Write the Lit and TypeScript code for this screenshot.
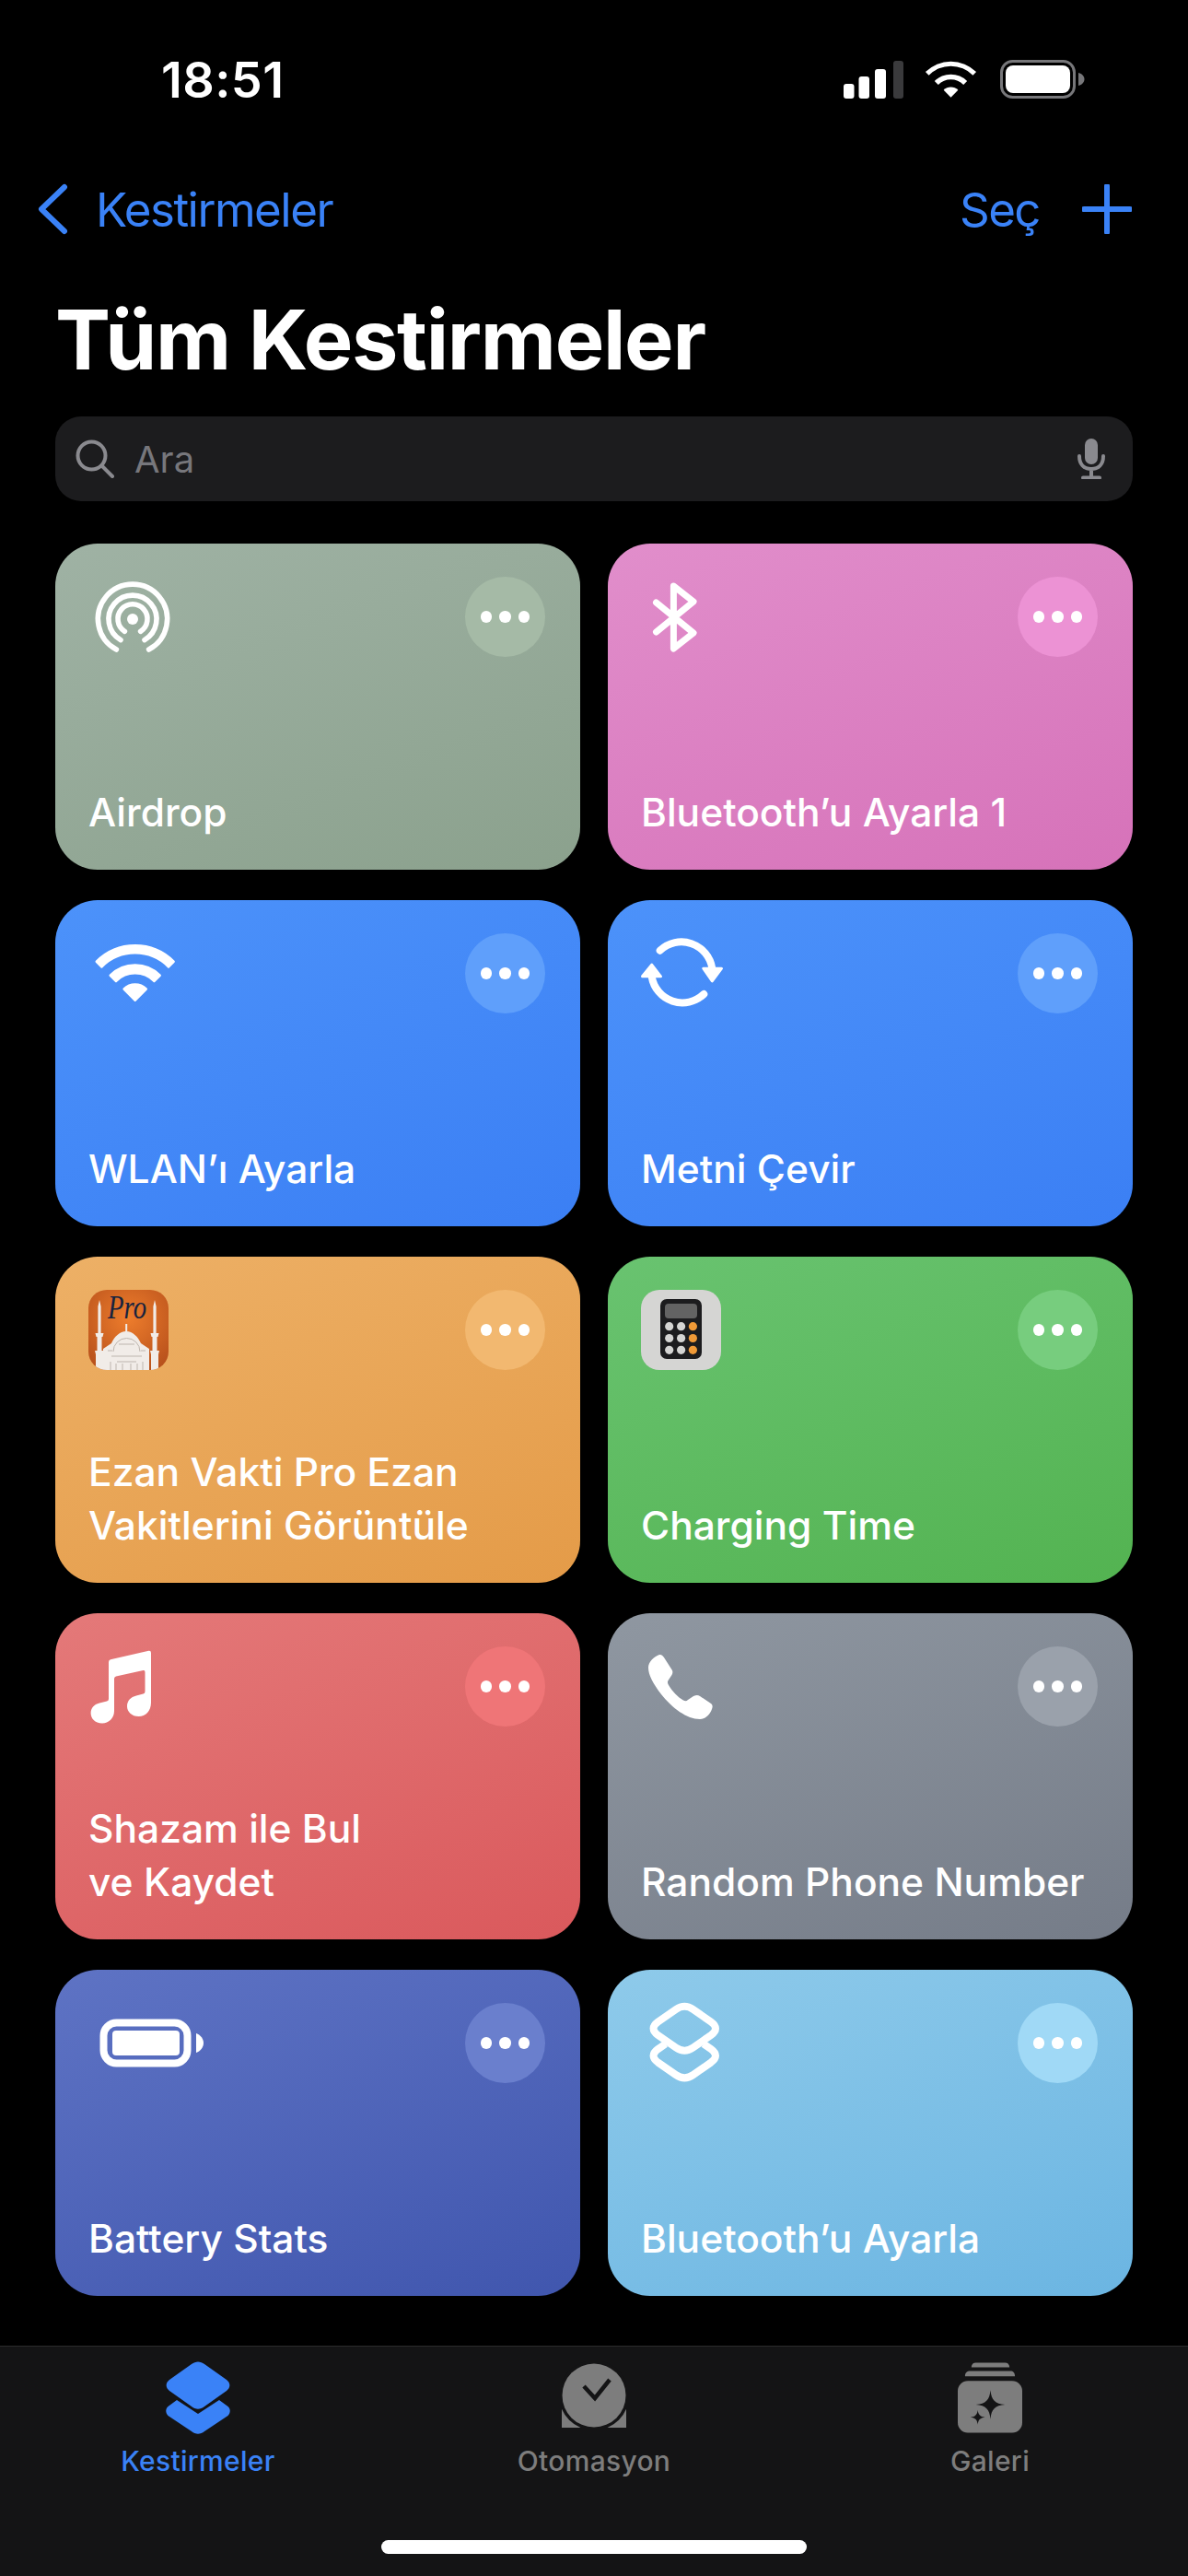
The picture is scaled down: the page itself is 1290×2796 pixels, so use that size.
/**
 * Shortcuts app, "Tüm Kestirmeler" screen on a dark iPhone.
 */
import { LitElement, html, css, svg } from "lit";
import { customElement } from "lit/decorators.js";

const WIFI_PATHS = svg`
    <path d="M1.5 20.5A61.5 61.5 0 0 1 88.5 20.5L82.8 26.2A53.5 53.5 0 0 0 7.2 26.2Z" />
    <path d="M17.1 36.1A39.5 39.5 0 0 1 72.9 36.1L66.6 42.4A30.5 30.5 0 0 0 23.4 42.4Z" />
    <path d="M32.6 51.6A17.5 17.5 0 0 1 57.4 51.6L45 64Z" />
`;

const ICON_AIRDROP = svg`
    <g class="line">
        <path d="M30.4 79A37.6 37.6 0 1 1 65.6 79" />
        <path d="M35 68.6A26 26 0 1 1 61 68.6" />
        <path d="M39.4 59.3A16 16 0 1 1 56.6 59.3" />
    </g>
    <circle class="solid" cx="48" cy="46" r="6" />
`;

const ICON_BLUETOOTH = svg`
    <path class="line thick" d="M16.5 28L57 61L35.4 78V10L57 27L16.5 60" />
`;

const ICON_WIFI = svg`
    <g class="solid rounded" transform="translate(7.5 11) scale(.96)">${WIFI_PATHS}</g>
`;

const ICON_SYNC = svg`
    <path class="line wide" d="M20.7 18.7A33.7 33.7 0 0 1 77.3 38" />
    <path class="line wide" d="M68.3 66A33.7 33.7 0 0 1 11.7 47" />
    <path class="solid rounded" d="M67.8 38.2H87.5L77.3 51.8Z" />
    <path class="solid rounded" d="M1.5 46.8H21.5L11.7 34.2Z" />
`;

const ICON_MUSIC = svg`
    <path class="solid" d="M22 17Q22 14.7 24 14.2L65.5 4.7Q68 4.3 68 7V61C68 70 62 76 54.7 76C47 76 42 71 42 65C42 59 46 55 52 53.5L59.5 51.5Q61.5 51 61.5 49V28Q61.5 25.5 59.5 26L30 32.5Q28 33 28 35V70C28 78 22 83.5 15 83.5C7 83.5 2.6 78 2.6 72.5C2.6 67 6 63 12 61.5L20 59.5Q22 59 22 57Z" />
`;

const ICON_PHONE = svg`
    <path class="solid" d="M20 9C22 8.5 24 10 25 12L33 24.5C35 27 34.5 29 33.5 31L29.5 37C28.5 39 29 40.5 30 42C34 49 40 55 46 58.5C48 59.5 49.5 59.5 51 58L57 54C60 52.5 62 52.5 64 54L76 62C78 63.5 78 66 77 68C75 74 70 79 64 79C50 79 34 67 22 52C13 40 8 31 8 23C8 17 14 11 20 9Z" />
`;

const ICON_BATTERY = svg`
    <rect class="line butt" x="16.5" y="21.5" width="91" height="44" rx="14" />
    <rect class="solid" x="26" y="30" width="73" height="27" rx="4" />
    <path class="solid" d="M117 33C122 35 125 39 125 43.5C125 48 122 52 117 54Z" />
`;

const ICON_LAYERS = svg`
    <path class="line butt" d="M38 7Q47.3 .5 56.6 7L76 20.5Q86 27.7 76 35L56.6 48.5Q47.3 55 38 48.5L18.5 35Q8.6 27.7 18.5 20.5Z" />
    <path class="line butt" d="M26.6 44.5L18.5 50.1Q8.6 57.3 18.5 64.6L38 78.1Q47.3 84.6 56.6 78.1L76 64.6Q86 57.3 76 50.1L68 44.5" />
`;

const ICON_EZAN = svg`
    <defs>
        <radialGradient id="ezan-bg" cx="50%" cy="35%" r="70%">
            <stop offset="0" stop-color="#ee7d2c" />
            <stop offset="1" stop-color="#b9521c" />
        </radialGradient>
        <clipPath id="ezan-clip"><rect width="87" height="87" rx="20" /></clipPath>
    </defs>
    <g clip-path="url(#ezan-clip)">
        <rect width="87" height="87" fill="url(#ezan-bg)" />
        <text class="pro" x="21" y="31" textLength="42" lengthAdjust="spacingAndGlyphs">Pro</text>
        <g fill="#f1ece8">
            <path d="M12 11L13.6 18V47H16.5L15.5 51H14.5V66H17L16 70V87H8V70L7 66H9.5V51H8.5L7.5 47H10.4V18Z" />
            <path d="M72 11L73.6 18V47H76.5L75.5 51H74.5V66H77L76 70V87H68V70L67 66H69.5V51H68.5L67.5 47H70.4V18Z" />
            <rect x="40.2" y="37" width="2" height="9" />
            <path d="M41.2 45C48 45 54 51 57 58L66 64V87H16V64L25 58C28 51 34 45 41.2 45Z" />
        </g>
        <g fill="none" stroke="#bdb5ae" stroke-width="1">
            <path d="M27 67A14.5 14.5 0 0 1 56 67" />
            <path d="M25 72H58M31 78H52M21 66H26M57 66H62M33 59H50" />
            <path d="M24 78V87M30 80V87M37 80V87M46 80V87M53 80V87M59 78V87" />
        </g>
    </g>
`;

const ICON_CALC = svg`
    <rect width="87" height="87" rx="20" fill="#d5d5d3" />
    <rect x="21" y="10" width="45" height="65" rx="7" fill="#1c1c1e" />
    <rect x="26" y="15" width="35" height="16" rx="4" fill="#636363" />
    ${[39.7, 52.5, 65.3].map(
        (y) => svg`
            <circle cx="30.7" cy=${y} r="4.6" fill="#d5d5d3" />
            <circle cx="43.6" cy=${y} r="4.6" fill="#d5d5d3" />
            <circle cx="56.4" cy=${y} r="4.6" fill="#f09a37" />
        `,
    )}
`;

const SHORTCUTS: { name: string[]; tone: string; icon: unknown }[] = [
    { name: ["Airdrop"], tone: "sage", icon: ICON_AIRDROP },
    { name: ["Bluetooth’u Ayarla 1"], tone: "pink", icon: ICON_BLUETOOTH },
    { name: ["WLAN’ı Ayarla"], tone: "blue", icon: ICON_WIFI },
    { name: ["Metni Çevir"], tone: "blue", icon: ICON_SYNC },
    { name: ["Ezan Vakti Pro Ezan", "Vakitlerini Görüntüle"], tone: "orange", icon: ICON_EZAN },
    { name: ["Charging Time"], tone: "green", icon: ICON_CALC },
    { name: ["Shazam ile Bul", "ve Kaydet"], tone: "red", icon: ICON_MUSIC },
    { name: ["Random Phone Number"], tone: "gray", icon: ICON_PHONE },
    { name: ["Battery Stats"], tone: "indigo", icon: ICON_BATTERY },
    { name: ["Bluetooth’u Ayarla"], tone: "sky", icon: ICON_LAYERS },
];

@customElement("app-root")
export class AppRoot extends LitElement {
    private _renderStatus() {
        return html`
            <div class="status">
                <span class="time">18:51</span>
                <svg class="signal" viewBox="0 0 65 41">
                    <rect y="25" width="11.5" height="16" rx="3" fill="#fff" />
                    <rect x="16.5" y="17" width="11.5" height="24" rx="3" fill="#fff" />
                    <rect x="34" y="9" width="12" height="32" rx="3" fill="#fff" />
                    <rect x="54" width="11" height="41" rx="3" fill="#3a3a3c" />
                </svg>
                <svg class="status-wifi" viewBox="0 0 90 66" fill="#fff">${WIFI_PATHS}</svg>
                <svg class="battery" viewBox="0 0 92 42">
                    <rect x="1.5" y="1.5" width="79" height="39" rx="12" fill="none" stroke="#77777a" stroke-width="3" />
                    <rect x="6" y="6" width="70" height="30" rx="8" fill="#fff" />
                    <path d="M85 14C89 15 91.5 18 91.5 21C91.5 24 89 27 85 28Z" fill="#77777a" />
                </svg>
            </div>
        `;
    }

    private _renderNav() {
        return html`
            <div class="nav">
                <svg class="chevron" viewBox="0 0 34 56">
                    <path d="M30 4L5 28L30 52" />
                </svg>
                <span class="back">Kestirmeler</span>
                <span class="select">Seç</span>
                <svg class="plus" viewBox="0 0 54 54">
                    <path d="M27 2V52M2 27H52" />
                </svg>
            </div>
        `;
    }

    private _renderSearch() {
        return html`
            <div class="search">
                <svg class="magnifier" viewBox="0 0 42 42">
                    <circle cx="17.5" cy="17.5" r="15" />
                    <path d="M28.5 28.5L40 40" />
                </svg>
                <span class="placeholder">Ara</span>
                <svg class="mic" viewBox="0 0 30 44">
                    <rect class="capsule" x="8" y="0" width="14" height="28" rx="7" />
                    <path d="M2 19C2 28 7 33 15 33C23 33 28 28 28 19M15 33V42M6 42.5H24" />
                </svg>
            </div>
        `;
    }

    private _renderCard(card: (typeof SHORTCUTS)[number]) {
        return html`
            <div class="card ${card.tone}">
                <div class="card-top">
                    <svg class="icon" viewBox="0 0 130 96">${card.icon}</svg>
                    <div class="more"><i></i><i></i><i></i></div>
                </div>
                <div class="name">
                    ${card.name.map((line) => html`<div>${line}</div>`)}
                </div>
            </div>
        `;
    }

    private _renderTabs() {
        return html`
            <div class="tabs">
                <div class="tab active">
                    <svg viewBox="0 0 70 80">
                        <path fill="#3a82f7" d="M2.5 59C-.5 56 -.5 51.5 2.5 49L12 42L35 57L58 42L67.5 49C70.5 51.5 70.5 56 67.5 59L42 76C37.5 79.5 32.5 79.5 28 76Z" />
                        <path fill="#3a82f7" stroke="#141415" stroke-width="3" paint-order="stroke" d="M28 3C32.5 -.5 37.5 -.5 42 3L66 20C70.5 23.5 70.5 28.5 66 32L42 49C37.5 52.5 32.5 52.5 28 49L4 32C-.5 28.5 -.5 23.5 4 20Z" />
                    </svg>
                    <span>Kestirmeler</span>
                </div>
                <div class="tab">
                    <svg viewBox="0 0 70 80">
                        <path fill="#7d7d7d" d="M0 52H70V72H0Z" />
                        <circle cx="35" cy="37" r="38" fill="#141415" />
                        <rect y="72" width="70" height="8" fill="#141415" />
                        <circle cx="35" cy="37" r="34.5" fill="#7d7d7d" />
                        <path d="M24 27L36 40L52 20" fill="none" stroke="#141415" stroke-width="4.5" />
                    </svg>
                    <span>Otomasyon</span>
                </div>
                <div class="tab">
                    <svg viewBox="0 0 71 80">
                        <path fill="#7d7d7d" d="M15 6C15 3 17 1 20 1H52C55 1 57 3 57 6ZM8 16C8 12 10 10 14 10H58C61 10 63 12 63 16Z" />
                        <rect y="21" width="71" height="57" rx="11" fill="#7d7d7d" />
                        <path fill="#141415" d="M36 31C37 42 41 46 52 47C41 48 37 52 36 63C35 52 31 48 20 47C31 46 35 42 36 31Z" />
                        <path fill="#141415" d="M22 53C22.5 58 24.5 60.5 30 61C24.5 61.5 22.5 64 22 69C21.5 64 19.5 61.5 14 61C19.5 60.5 21.5 58 22 53Z" />
                    </svg>
                    <span>Galeri</span>
                </div>
                <div class="home"></div>
            </div>
        `;
    }

    render() {
        return html`
            ${this._renderStatus()} ${this._renderNav()}
            <h1>Tüm Kestirmeler</h1>
            ${this._renderSearch()}
            <div class="grid">${SHORTCUTS.map((c) => this._renderCard(c))}</div>
            ${this._renderTabs()}
        `;
    }

    static styles = css`
        :host {
            display: flex;
            flex-direction: column;
            width: 1290px;
            height: 2796px;
            background: #000;
            color: #fff;
            font-family: Inter, "Liberation Sans", sans-serif;
            overflow: hidden;
        }
        svg {
            display: block;
            flex: none;
        }

        .status {
            display: flex;
            align-items: center;
            height: 42px;
            padding: 65px 112px 0 175px;
        }
        .time {
            font-size: 54px;
            font-weight: 600;
            letter-spacing: 0.4px;
            margin-right: auto;
        }
        .signal {
            width: 65px;
            height: 41px;
        }
        .status-wifi {
            width: 57px;
            height: 42px;
            margin-left: 23px;
        }
        .battery {
            width: 92px;
            height: 42px;
            margin-left: 25px;
        }

        .nav {
            display: flex;
            align-items: center;
            height: 60px;
            margin-top: 90px;
            padding: 0 61px 0 40px;
            color: #3a82f7;
            font-size: 51px;
            letter-spacing: -1.5px;
        }
        .chevron {
            width: 34px;
            height: 56px;
        }
        .chevron path,
        .plus path {
            fill: none;
            stroke: #3a82f7;
            stroke-width: 6;
            stroke-linecap: round;
            stroke-linejoin: round;
        }
        .back {
            margin-left: 30px;
            margin-right: auto;
        }
        .plus {
            width: 54px;
            height: 54px;
            margin-left: 46px;
        }

        h1 {
            margin: 50px 0 0 60px;
            height: 124px;
            font-size: 90px;
            line-height: 124px;
            font-weight: 700;
            letter-spacing: -1.3px;
        }

        .search {
            display: flex;
            align-items: center;
            height: 92px;
            margin: 21px 60px 0;
            padding: 0 30px 0 22px;
            background: #1c1c1e;
            border-radius: 28px;
        }
        .magnifier {
            width: 42px;
            height: 42px;
        }
        .magnifier circle,
        .magnifier path,
        .mic path {
            fill: none;
            stroke: #8a8a8f;
            stroke-width: 4;
            stroke-linecap: round;
        }
        .placeholder {
            margin-left: 22px;
            margin-right: auto;
            font-size: 40px;
            color: #77777c;
        }
        .mic {
            width: 30px;
            height: 44px;
        }
        .mic .capsule {
            fill: #8a8a8f;
        }

        .grid {
            display: grid;
            grid-template-columns: 570px 570px;
            grid-auto-rows: 354px;
            gap: 33px 30px;
            margin: 46px 60px 0;
        }
        .card {
            display: flex;
            flex-direction: column;
            padding: 36px 38px 33px 36px;
            border-radius: 46px;
            background: linear-gradient(160deg, var(--from), var(--to));
        }
        .sage {
            --from: #9fb2a4;
            --to: #8ba18d;
            --more: #a5baa6;
        }
        .pink {
            --from: #e18ecb;
            --to: #d672b9;
            --more: #ec92d4;
        }
        .blue {
            --from: #4c92fa;
            --to: #3b7ff4;
            --more: #5f9ffb;
        }
        .orange {
            --from: #edb066;
            --to: #e49b48;
            --more: #f2b870;
        }
        .green {
            --from: #69c370;
            --to: #53b351;
            --more: #77cd7e;
        }
        .red {
            --from: #e47979;
            --to: #da595c;
            --more: #ef7577;
        }
        .gray {
            --from: #8f97a1;
            --to: #757c88;
            --more: #9aa1ab;
        }
        .indigo {
            --from: #5e73c4;
            --to: #4056ae;
            --more: #6a7fcd;
        }
        .sky {
            --from: #8ecaea;
            --to: #6bb5e2;
            --more: #a0d9f6;
        }

        .card-top {
            display: flex;
            justify-content: space-between;
            align-items: flex-start;
        }
        .icon {
            width: 130px;
            height: 96px;
            overflow: visible;
        }
        .icon .line {
            fill: none;
            stroke: #fff;
            stroke-width: 5.6;
            stroke-linecap: round;
            stroke-linejoin: round;
        }
        .icon .thick {
            stroke-width: 7;
        }
        .icon .wide,
        .icon .butt {
            stroke-width: 8;
        }
        .icon .butt {
            stroke-linecap: butt;
        }
        .icon .solid {
            fill: #fff;
        }
        .icon .rounded {
            stroke: #fff;
            stroke-width: 3;
            stroke-linejoin: round;
        }
        .icon .pro {
            font-family: "Liberation Serif", serif;
            font-style: italic;
            font-size: 35px;
            fill: #17233f;
        }
        .more {
            display: flex;
            justify-content: center;
            align-items: center;
            gap: 8px;
            width: 87px;
            height: 87px;
            border-radius: 50%;
            background: var(--more);
        }
        .more i {
            width: 12.5px;
            height: 12.5px;
            border-radius: 50%;
            background: #fff;
        }
        .name {
            margin-top: auto;
            font-size: 42.5px;
            line-height: 58px;
            font-weight: 500;
        }

        .tabs {
            position: relative;
            display: grid;
            grid-template-columns: repeat(3, 1fr);
            height: 249px;
            margin-top: auto;
            background: #141415;
            border-top: 1px solid #2b2b2d;
        }
        .tab {
            display: flex;
            flex-direction: column;
            align-items: center;
            padding-top: 16px;
            color: #7d7d7d;
            font-size: 30px;
            font-weight: 500;
            letter-spacing: 0.3px;
        }
        .tab svg {
            width: 70px;
            height: 80px;
        }
        .tab span {
            margin-top: 10px;
        }
        .tab.active {
            color: #3a82f7;
        }
        .home {
            position: absolute;
            left: 414px;
            top: 210px;
            width: 462px;
            height: 15px;
            border-radius: 8px;
            background: #fff;
        }
    `;
}

declare global {
    interface HTMLElementTagNameMap {
        "app-root": AppRoot;
    }
}
